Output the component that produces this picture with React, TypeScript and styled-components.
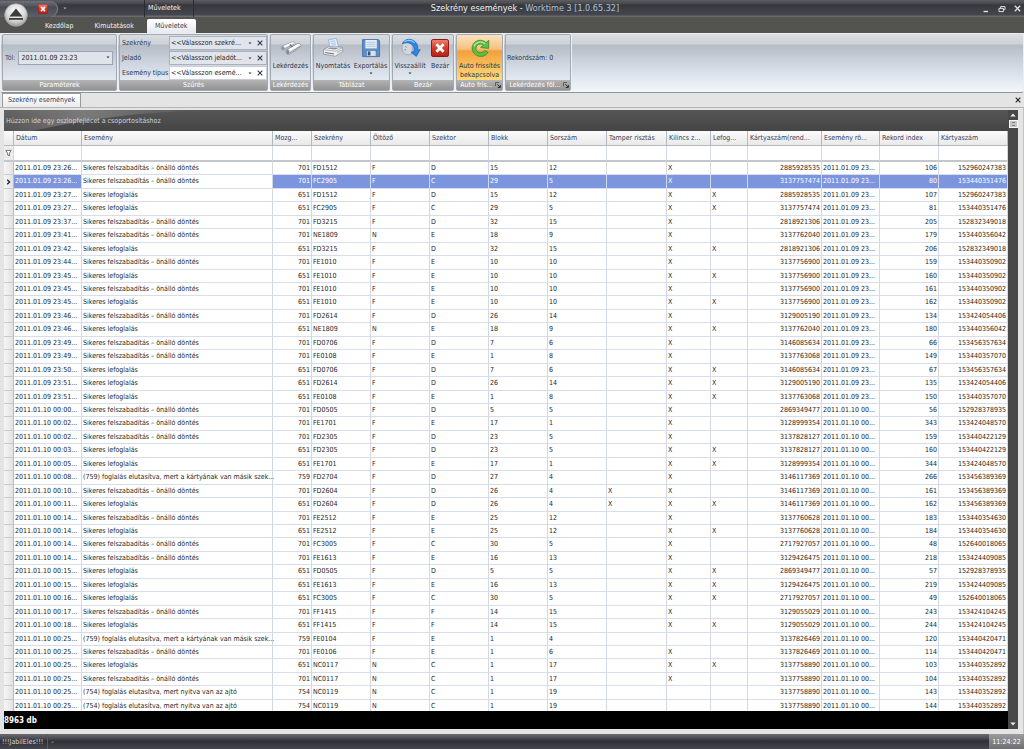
import React, { useState } from 'react';
import styled, { createGlobalStyle, css } from 'styled-components';

const GlobalStyle = createGlobalStyle`
  *, *::before, *::after { box-sizing: border-box; }
  html, body { margin: 0; padding: 0; }
  body, button, input, select, table {
    font-family: 'DejaVu Sans Condensed', 'DejaVu Sans', sans-serif;
    font-size: 7px;
    color: #1c1f26;
  }
  button, input, select { margin: 0; padding: 0; border: 0; background: none; outline: none; }
  button { cursor: pointer; }
`;

const Window = styled.div`
  display: flex;
  flex-direction: column;
  height: 100vh;
  overflow: hidden;
  background: #e4e4e4;
  line-height: 10px;
`;

/* ---------- title bar ---------- */

const TitleBar = styled.header`
  position: relative;
  flex: none;
  display: grid;
  grid-template-columns: 144px 50px 1fr auto;
  height: 17px;
  background: linear-gradient(#5c5d60 0, #4c4d52 3px, #36383e 5px, #45474e 15px, #6a6a72 16px);
`;

const QuickAccess = styled.div`
  display: flex;
  align-items: center;
  justify-content: flex-end;
  width: 58px;
  height: 16px;
  padding-right: 9px;
  border-right: 1px solid #80838b;
  border-radius: 0 8px 8px 0;
  background: linear-gradient(#6d7078, #4a4c53 40%, #5d6068);
`;

const QuickRow = styled.div`
  display: flex;
  align-items: center;
  gap: 5px;
  color: #b9bcc4;
`;

const IconButton = styled.button`
  display: flex;
  align-items: center;
  justify-content: center;
  flex: none;
  color: inherit;
`;

const ContextTitle = styled.div`
  border-left: 1px solid #2c2d31;
  border-right: 1px solid #2c2d31;
  padding-left: 3px;
  line-height: 17px;
  color: #f4f4f4;
`;

const Title = styled.h1`
  margin: 0;
  padding-right: 126px;
  text-align: center;
  font-size: 9px;
  font-weight: normal;
  line-height: 17px;
  color: #f0f0f0;
  span { color: #a9c0de; }
`;

const WindowButtons = styled.div`
  display: flex;
  align-items: center;
  gap: 8px;
  padding-right: 3px;
  color: #dfe0e4;
`;

const AppButton = styled.button`
  position: absolute;
  left: 4px;
  top: 3px;
  z-index: 2;
  display: block;
  width: 24px;
  height: 24px;
`;

/* ---------- ribbon ---------- */

const TabRow = styled.nav`
  flex: none;
  display: flex;
  align-items: flex-end;
  gap: 5px;
  height: 16px;
  padding-left: 37px;
  background: #535350;
`;

const Tab = styled.button<{ $active?: boolean }>`
  height: 14px;
  padding: 0 8px;
  border-radius: 2px 2px 0 0;
  line-height: 14px;
  color: ${(p) => (p.$active ? '#3a3f4a' : '#f2f2f2')};
  background: ${(p) => (p.$active ? 'linear-gradient(#ffffff, #e6e9ee)' : 'transparent')};
`;

const Ribbon = styled.div`
  flex: none;
  height: 60px;
  background: #e4e4e4;
`;

const RibbonBody = styled.div`
  display: flex;
  gap: 2px;
  height: 60px;
  padding: 0 1px 1px;
  border: 1px solid #eceef1;
  border-bottom-color: #8f949b;
  border-radius: 3px;
  background: linear-gradient(#dbdee3 0, #cdd2d8 10px, #b6bcc6 11px, #d5dbe4 34px, #f2f7fb 58px);
`;

const Group = styled.section<{ $w: number }>`
  flex: none;
  display: flex;
  flex-direction: column;
  width: ${(p) => p.$w}px;
  border: 1px solid #a3a9b2;
  border-radius: 2px;
  box-shadow: 1px 0 0 #eef1f4;
`;

const GroupContent = styled.div`
  flex: 1;
  display: flex;
  justify-content: center;
  min-height: 0;
`;

const GroupCaption = styled.div`
  flex: none;
  display: flex;
  align-items: center;
  height: 10px;
  padding: 0 1px;
  color: #ffffff;
  background: linear-gradient(#b4b4b4, #929292);
  white-space: nowrap;
  overflow: hidden;
  span { flex: 1; text-align: center; }
`;

const DateField = styled.label`
  align-self: center;
  display: flex;
  align-items: center;
  width: 100%;
  padding: 0 3px 0 2px;
  gap: 3px;
  color: #3b4a66;
`;

const FieldBox = styled.span`
  flex: 1;
  display: flex;
  height: 14px;
  padding: 0 2px;
  border: 1px solid #9aa4b2;
  background: #dfe4ea;
  color: #2b2f38;
`;

const TextInput = styled.input`
  flex: 1;
  min-width: 0;
  line-height: 10px;
`;

const FilterGrid = styled.div`
  display: grid;
  grid-template-columns: 47px 1fr;
  grid-auto-rows: 14px;
  row-gap: 1px;
  align-content: start;
  align-items: center;
  width: 100%;
  padding: 1px 3px 0 2px;
  color: #2b3850;
`;

const Combo = styled.div<{ $hot?: boolean }>`
  display: flex;
  align-items: center;
  height: 14px;
  padding: 0 3px 0 1px;
  gap: 5px;
  border: 1px solid ${(p) => (p.$hot ? '#c9ced6' : '#a9b1bd')};
  background: ${(p) => (p.$hot ? '#ffffff' : '#e1e5eb')};
`;

const Select = styled.select`
  appearance: none;
  flex: 1;
  min-width: 0;
  height: 12px;
  line-height: 12px;
`;

const Tool = styled.button<{ $on?: boolean; $w: number }>`
  display: flex;
  flex-direction: column;
  align-items: center;
  flex: none;
  width: ${(p) => p.$w}px;
  padding-top: 2px;
  line-height: 9px;
  white-space: nowrap;
  color: #28344a;
  ${(p) =>
    p.$on &&
    css`
      background: linear-gradient(#fbe3c0 0, #f6c080 14px, #f2a03c 16px, #ffdc7c 100%);
    `}
  svg { flex: none; }
`;

const ToolLabel = styled.span`
  margin: 3px 0 1px;
  text-align: center;
  white-space: pre-line;
`;

const Status = styled.p`
  align-self: center;
  flex: 1;
  margin: 0;
  padding: 0 1px;
  color: #2b3850;
`;

/* ---------- document area ---------- */

const DocTabs = styled.div`
  flex: none;
  display: flex;
  align-items: center;
  justify-content: space-between;
  height: 15px;
  padding: 0 3px 0 2px;
  border-bottom: 1px solid #b4b4b4;
  color: #222222;
`;

const DocTab = styled.button`
  height: 14px;
  padding: 0 5px;
  border: 1px solid #9a9a9a;
  border-bottom: 0;
  background: linear-gradient(#ffffff, #ebebeb);
  line-height: 13px;
  color: #33415c;
`;

const Frame = styled.main`
  flex: 1;
  display: flex;
  min-height: 0;
  padding: 2px 5px 5px 4px;
  border-right: 1px solid #c4c4c4;
`;

const GridPane = styled.div`
  flex: 1;
  display: flex;
  flex-direction: column;
  min-width: 0;
`;

const GroupPanel = styled.div`
  position: relative;
  flex: none;
  height: 21px;
  padding: 0 2px;
  line-height: 22px;
  color: #d2d2d2;
  background: linear-gradient(#565656, #444444);
  svg { position: absolute; left: 0; top: 0; }
  span { position: relative; }
`;

const GridScroll = styled.div`
  flex: 1;
  min-height: 0;
  overflow: hidden;
  background: #ffffff;
`;

const Grid = styled.table`
  width: 100%;
  table-layout: fixed;
  border-collapse: separate;
  border-spacing: 0;
`;

const HeadCell = styled.th`
  height: 15px;
  padding: 0 3px 0 2px;
  border-right: 1px solid #b4b8c0;
  border-bottom: 1px solid #b4b8c0;
  background: linear-gradient(#fbfbfb, #e9e9e9);
  font-weight: normal;
  text-align: left;
  line-height: 12px;
  white-space: nowrap;
  overflow: hidden;
  color: #35425a;
`;

const FilterCell = styled.td<{ $gutter?: boolean }>`
  height: 16px;
  padding: 0 1px 1px;
  border-right: 1px solid #d3d7e8;
  border-bottom: 2px solid #c3c6ca;
  background: ${(p) => (p.$gutter ? '#ededed' : '#ffffff')};
  line-height: 0;
  input { width: 100%; height: 11px; }
`;

const Row = styled.tr<{ $selected?: boolean }>`
  height: 13px;
  /* the row pitch alternates 13/14, restarting every nine rows */
  &:nth-child(9n + 2),
  &:nth-child(9n + 4),
  &:nth-child(9n + 6),
  &:nth-child(9n + 8) { height: 14px; }
  ${(p) =>
    p.$selected &&
    css`
      td { background: #7b95de; color: #ffffff; }
      td:nth-of-type(2) { background: #ffffff; color: #1c1f26; }
    `}
`;

const Cell = styled.td<{ $right?: boolean }>`
  padding: 0 1px;
  border-right: 1px solid #d3d7e8;
  border-bottom: 1px solid #d9dcea;
  text-align: ${(p) => (p.$right ? 'right' : 'left')};
  line-height: 11px;
  white-space: nowrap;
`;

const RowHead = styled.th`
  padding: 0 2px;
  border-right: 1px solid #b9bcc4;
  border-bottom: 1px solid #c9c9c9;
  background: linear-gradient(90deg, #f6f6f6, #e2e2e2);
  line-height: 0;
`;

const Footer = styled.footer`
  flex: none;
  height: 18px;
  background: #000000;
  color: #ffffff;
  font-size: 8px;
  font-weight: bold;
  line-height: 19px;
`;

const ScrollBar = styled.div`
  flex: none;
  display: flex;
  flex-direction: column;
  align-items: center;
  width: 10px;
  background: #484848;
  color: #f0f0f0;
  button { width: 10px; height: 10px; }
`;

const Thumb = styled.div`
  width: 9px;
  height: 8px;
  padding: 1px 2px;
  background: #c4c4c4;
  border: 1px solid #f6f6f6;
  div { height: 4px; border-top: 1px solid #808080; border-bottom: 1px solid #808080; }
`;

const Spacer = styled.div`
  flex: 1;
`;

const StatusBar = styled.div`
  flex: none;
  display: flex;
  justify-content: space-between;
  height: 15px;
  line-height: 16px;
  color: #d9dbe0;
  background: linear-gradient(#6a6c72 0, #4c4e55 4px, #2f3136 7px, #45474e 15px);
`;

const StatusText = styled.div`
  display: flex;
  gap: 4px;
  padding-left: 2px;
  span + span { border-left: 1px solid #5a5c62; padding-left: 3px; }
`;

const Clock = styled.time`
  width: 35px;
  text-align: center;
  background: linear-gradient(#9a9b9d, #6e6f72);
  color: #ffffff;
`;

/* ---------- icons ---------- */

const CrossIcon = ({ size = 6, weight = 1.1 }: { size?: number; weight?: number }) => (
  <svg width={size} height={size} viewBox="0 0 6 6" aria-hidden="true">
    <path d="M0.7 0.7 5.3 5.3M5.3 0.7 0.7 5.3" stroke="currentColor" strokeWidth={weight} />
  </svg>
);

const DownIcon = ({ up = false }: { up?: boolean }) => (
  <svg width="6" height="4" viewBox="0 0 6 4" aria-hidden="true">
    <path d={up ? 'M0.4 3.5 3 0.6 5.6 3.5z' : 'M0.4 0.5 3 3.4 5.6 0.5z'} fill="currentColor" />
  </svg>
);

const CaretIcon = () => (
  <svg width="4" height="3" viewBox="0 0 4 3" aria-hidden="true">
    <path d="M0.5 0.6H3.5L2 2.3z" fill="currentColor" />
  </svg>
);

const RedCloseIcon = ({ size }: { size: number }) => (
  <svg width={size} height={size} viewBox="0 0 18 18" aria-hidden="true">
    <defs>
      <linearGradient id="redFill" x1="0" y1="0" x2="0" y2="1">
        <stop offset="0" stopColor="#ee8272" />
        <stop offset="0.5" stopColor="#d63a2b" />
        <stop offset="1" stopColor="#b51f16" />
      </linearGradient>
    </defs>
    <rect x="0.5" y="0.5" width="17" height="17" rx="1.6" fill="url(#redFill)" stroke="#8f1a14" />
    <path d="M5.4 5.2 12.6 12.8M12.6 5.2 5.4 12.8" stroke="#ffffff" strokeWidth="2.8" />
  </svg>
);

const AppIcon = () => (
  <svg width="24" height="24" viewBox="0 0 24 24" aria-hidden="true">
    <defs>
      <radialGradient id="orb" cx="0.5" cy="0.35" r="0.7">
        <stop offset="0" stopColor="#ffffff" />
        <stop offset="0.6" stopColor="#d5d5d5" />
        <stop offset="1" stopColor="#8d8d8d" />
      </radialGradient>
    </defs>
    <circle cx="12" cy="12" r="11.3" fill="url(#orb)" stroke="#a6a6a6" strokeWidth="0.8" />
    <path d="M12 5.4 18.6 13.4H5.4z" fill="#3c3c3c" />
    <rect x="5" y="15" width="14" height="1.8" fill="#3c3c3c" />
  </svg>
);

const ScopeIcon = () => (
  <svg width="22" height="22" viewBox="0 0 22 22" aria-hidden="true">
    <path d="M2 9.2 12.6 4.8C14.6 4.4 16 6.6 14.6 8L4.6 13.2C2 13.8 0.6 10.8 2 9.2z" fill="#eceef0" stroke="#8b9097" strokeWidth="0.7" />
    <path d="M6.8 12.8 18 6.4C20.2 5.8 21.8 8.4 20.2 10L9.6 17.2C6.8 18 5 14.8 6.8 12.8z" fill="#f4f5f6" stroke="#7b8087" strokeWidth="0.7" />
    <path d="M4.2 12 14 7.2M9.2 16 20 9.2" stroke="#9ba0a7" strokeWidth="1.1" />
    <path d="M4 9.6 12.6 5.9M9 13 18 7.6" stroke="#ffffff" strokeWidth="1.3" />
    <ellipse cx="3" cy="11.3" rx="1.5" ry="2" fill="#8d939a" />
    <ellipse cx="7.8" cy="15" rx="1.7" ry="2.2" fill="#868c93" />
    <path d="M9.8 7.4 12.2 9.8" stroke="#6c7178" strokeWidth="1.4" />
  </svg>
);

const PrinterIcon = () => (
  <svg width="22" height="22" viewBox="0 0 22 22" aria-hidden="true">
    <path d="M6.4 2.8 14.4 1.4 16.6 9.8 8 11.4z" fill="#e4f1fc" stroke="#8aa5bf" strokeWidth="0.7" />
    <path d="M8.2 4.6 13.2 3.8M8.8 6.6 13.8 5.8M9.4 8.4 14.2 7.6" stroke="#8fbbe4" strokeWidth="0.8" />
    <path d="M1.4 12.4 7 9.6 20.4 10.2 21 14.4 13.6 19.2 1.6 17.2z" fill="#eceef0" stroke="#84898f" strokeWidth="0.7" />
    <path d="M1.4 12.6 13.6 14.2 20.6 10.4" stroke="#9aa0a6" strokeWidth="0.7" fill="none" />
    <path d="M5.2 11.6 8.4 10.4 16.6 10.9 13.2 12.4z" fill="#8a9097" />
    <path d="M3.2 15.6 12 16.9" stroke="#6a6f75" strokeWidth="1" />
    <path d="M15 15.6 19.8 12.8" stroke="#b9bdc2" strokeWidth="1.4" />
  </svg>
);

const FloppyIcon = () => (
  <svg width="22" height="22" viewBox="0 0 22 22" aria-hidden="true">
    <path d="M2.6 2.6H18.4L19.6 4V19.6H2.6z" fill="#5b8fc9" stroke="#3a689f" strokeWidth="0.8" />
    <rect x="5.4" y="3" width="11.4" height="8.4" fill="#e6eef6" />
    <path d="M6.6 5.4H15.6M6.6 7.4H15.6M6.6 9.4H15.6" stroke="#a6c2df" strokeWidth="0.8" />
    <rect x="6.4" y="13.4" width="9.6" height="5.8" fill="#dce1e7" stroke="#3a689f" strokeWidth="0.5" />
    <rect x="7.8" y="14.4" width="2.6" height="4" fill="#35577f" />
  </svg>
);

const RestoreIcon = () => (
  <svg width="22" height="22" viewBox="0 0 22 22" aria-hidden="true">
    <path d="M4 6.6C7 4 12 5 13.4 9.4L13 16.8C9.6 18.8 5 17.6 3.6 14 2.8 11.4 2.8 8.6 4 6.6z" fill="#d3d7dc" stroke="#989ea6" strokeWidth="0.7" />
    <path d="M6.4 9.4 7.8 10.4M5.4 13 7 12.6" stroke="#7d848c" strokeWidth="0.9" />
    <path d="M3.2 6.8C5 2.6 10.2 1 14.4 3.4 18 5.4 19.4 9 18.8 13L21.2 12.6 17.4 19.4 12 15.4 15 14.4C15.6 11 14.6 8 11.8 6.8 9 5.4 6 5.6 3.2 6.8z" fill="#2b86e4" stroke="#1a5aa8" strokeWidth="0.6" />
    <path d="M5.4 4.8C8.4 2.6 13 2.8 15.6 6" stroke="#8fd0ff" strokeWidth="1.1" fill="none" />
  </svg>
);

const RefreshIcon = () => (
  <svg width="22" height="22" viewBox="0 0 22 22" aria-hidden="true">
    <path d="M19.8 3.4 19.6 11.4 11.6 10.6 14.4 8.2C12 6.2 8.2 7 7.2 10 6.2 13.4 9 16.4 12.4 15.6 14 15.2 15 14.4 15.8 13.4L19 15.4C17.2 18.4 13.6 20 10 19.2 5 18 2 13.2 3.6 8.6 5.4 3.2 12.4 1.4 17 5.6z" fill="#5fbf42" stroke="#338a22" strokeWidth="0.8" />
    <path d="M5 9.4C6.4 4.8 12.2 3.4 16.2 6.8" stroke="#b6ec9a" strokeWidth="1.2" fill="none" />
  </svg>
);

const LauncherIcon = () => (
  <svg width="6" height="6" viewBox="0 0 6 6" aria-hidden="true">
    <path d="M0.5 4V0.5H4" stroke="#5c5c5c" fill="none" />
    <path d="M2.4 2.4 5 5M5.4 3V5.5H2.8" stroke="#303030" fill="none" />
  </svg>
);

const FunnelIcon = () => (
  <svg width="7" height="8" viewBox="0 0 7 8" aria-hidden="true">
    <path d="M0.8 1.4H6.2L4.4 4.2V6.8L2.6 6V4.2z" fill="#ffffff" stroke="#555555" strokeWidth="0.8" />
  </svg>
);

const PointerIcon = () => (
  <svg width="5" height="6" viewBox="0 0 5 6" aria-hidden="true">
    <path d="M1.2 0.8 3.6 3 1.2 5.2" stroke="#222222" strokeWidth="1.3" fill="none" />
  </svg>
);

/* ---------- data ---------- */

const EVENTS: Record<number, string> = {
  701: 'Sikeres felszabadítás – önálló döntés',
  651: 'Sikeres lefoglalás',
  759: '(759) foglalás elutasítva, mert a kártyának van másik szek...',
  754: '(754) foglalás elutasítva, mert nyitva van az ajtó',
};

// time, movement code, locker, flags (T tamper, K handle, L reserved), sorted card no., record index, card no.
type Entry = [string, number, string, string, string, number, string];

const ENTRIES: Entry[] = [
  ['09 23:26', 701, 'FD1512', 'K', '2885928535', 106, '152960247383'],
  ['09 23:26', 701, 'FC2905', 'K', '3137757474', 80, '153440351476'],
  ['09 23:27', 651, 'FD1512', 'KL', '2885928535', 107, '152960247383'],
  ['09 23:27', 651, 'FC2905', 'KL', '3137757474', 81, '153440351476'],
  ['09 23:37', 701, 'FD3215', 'K', '2818921306', 205, '152832349018'],
  ['09 23:41', 701, 'NE1809', 'K', '3137762040', 179, '153440356042'],
  ['09 23:42', 651, 'FD3215', 'KL', '2818921306', 206, '152832349018'],
  ['09 23:44', 701, 'FE1010', 'K', '3137756900', 159, '153440350902'],
  ['09 23:45', 651, 'FE1010', 'KL', '3137756900', 160, '153440350902'],
  ['09 23:45', 701, 'FE1010', 'K', '3137756900', 161, '153440350902'],
  ['09 23:45', 651, 'FE1010', 'KL', '3137756900', 162, '153440350902'],
  ['09 23:46', 701, 'FD2614', 'K', '3129005190', 134, '153424054406'],
  ['09 23:46', 651, 'NE1809', 'KL', '3137762040', 180, '153440356042'],
  ['09 23:49', 701, 'FD0706', 'K', '3146085634', 66, '153456357634'],
  ['09 23:49', 701, 'FE0108', 'K', '3137763068', 149, '153440357070'],
  ['09 23:50', 651, 'FD0706', 'KL', '3146085634', 67, '153456357634'],
  ['09 23:51', 651, 'FD2614', 'KL', '3129005190', 135, '153424054406'],
  ['09 23:51', 651, 'FE0108', 'KL', '3137763068', 150, '153440357070'],
  ['10 00:00', 701, 'FD0505', 'K', '2869349477', 56, '152928378935'],
  ['10 00:02', 701, 'FE1701', 'K', '3128999354', 343, '153424048570'],
  ['10 00:02', 701, 'FD2305', 'K', '3137828127', 159, '153440422129'],
  ['10 00:03', 651, 'FD2305', 'KL', '3137828127', 160, '153440422129'],
  ['10 00:05', 651, 'FE1701', 'KL', '3128999354', 344, '153424048570'],
  ['10 00:08', 759, 'FD2704', 'K', '3146117369', 266, '153456389369'],
  ['10 00:10', 701, 'FD2604', 'TK', '3146117369', 161, '153456389369'],
  ['10 00:11', 651, 'FD2604', 'TKL', '3146117369', 162, '153456389369'],
  ['10 00:14', 701, 'FE2512', 'K', '3137760628', 183, '153440354630'],
  ['10 00:14', 651, 'FE2512', 'KL', '3137760628', 184, '153440354630'],
  ['10 00:14', 701, 'FC3005', 'K', '2717927057', 48, '152640018065'],
  ['10 00:14', 701, 'FE1613', 'K', '3129426475', 218, '153424409085'],
  ['10 00:15', 651, 'FD0505', 'KL', '2869349477', 57, '152928378935'],
  ['10 00:15', 651, 'FE1613', 'KL', '3129426475', 219, '153424409085'],
  ['10 00:16', 651, 'FC3005', 'KL', '2717927057', 49, '152640018065'],
  ['10 00:17', 701, 'FF1415', 'K', '3129055029', 243, '153424104245'],
  ['10 00:18', 651, 'FF1415', 'KL', '3129055029', 244, '153424104245'],
  ['10 00:25', 759, 'FE0104', '', '3137826469', 120, '153440420471'],
  ['10 00:25', 701, 'FE0106', 'K', '3137826469', 114, '153440420471'],
  ['10 00:25', 651, 'NC0117', 'KL', '3137758890', 103, '153440352892'],
  ['10 00:25', 701, 'NC0117', 'K', '3137758890', 104, '153440352892'],
  ['10 00:25', 754, 'NC0119', '', '3137758890', 143, '153440352892'],
  ['10 00:25', 754, 'NC0119', '', '3137758890', 144, '153440352892'],
];

const COLUMNS: { label: string; width: number; right?: boolean }[] = [
  { label: 'Dátum', width: 68 },
  { label: 'Esemény', width: 191 },
  { label: 'Mozg...', width: 39, right: true },
  { label: 'Szekrény', width: 59 },
  { label: 'Öltöző', width: 59 },
  { label: 'Szektor', width: 59 },
  { label: 'Blokk', width: 59 },
  { label: 'Sorszám', width: 59 },
  { label: 'Tamper risztás', width: 60 },
  { label: 'Kilincs z...', width: 44 },
  { label: 'Lefog...', width: 37 },
  { label: 'Kártyaszám(rend...', width: 74, right: true },
  { label: 'Esemény rö...', width: 58 },
  { label: 'Rekord index', width: 59, right: true },
  { label: 'Kártyaszám', width: 69, right: true },
];

const toCells = ([time, code, locker, flags, sorted, index, card]: Entry) => [
  `2011.01.${time}...`,
  EVENTS[code],
  code,
  locker,
  locker[0],
  locker[1],
  Number(locker.slice(2, 4)),
  Number(locker.slice(4)),
  flags.includes('T') ? 'X' : '',
  flags.includes('K') ? 'X' : '',
  flags.includes('L') ? 'X' : '',
  sorted,
  `2011.01.${time.slice(0, 5)}...`,
  index,
  card,
];

const FILTERS = [
  { id: 'locker', label: 'Szekrény', value: '<<Válasszon szekré...' },
  { id: 'tag', label: 'Jeladó', value: '<<Válasszon jeladót...' },
  { id: 'type', label: 'Esemény típus', value: '<<Válasszon esemé...', hot: true },
];

/* ---------- parts ---------- */

const RibbonGroup = ({
  title,
  width,
  launcher,
  children,
}: {
  title: string;
  width: number;
  launcher?: boolean;
  children: React.ReactNode;
}) => (
  <Group $w={width}>
    <GroupContent>{children}</GroupContent>
    <GroupCaption>
      <span>{title}</span>
      {launcher && (
        <IconButton aria-label={`${title} beállításai`}>
          <LauncherIcon />
        </IconButton>
      )}
    </GroupCaption>
  </Group>
);

export default function App() {
  const [selected, setSelected] = useState(1);
  const [from, setFrom] = useState('2011.01.09 23:23');

  return (
    <Window>
      <GlobalStyle />
      <TitleBar>
        <AppButton aria-label="Alkalmazás menü">
          <AppIcon />
        </AppButton>
        <QuickRow>
          <QuickAccess>
            <IconButton aria-label="Bezár">
              <RedCloseIcon size={10} />
            </IconButton>
          </QuickAccess>
          <IconButton aria-label="Gyorselérés testreszabása">
            <CaretIcon />
          </IconButton>
        </QuickRow>
        <ContextTitle>Műveletek</ContextTitle>
        <Title>
          Szekrény események - <span>Worktime 3 [1.0.65.32]</span>
        </Title>
        <WindowButtons>
          <IconButton aria-label="Kis méret">
            <svg width="8" height="8" viewBox="0 0 8 8" aria-hidden="true">
              <path d="M1.5 6.5H6" stroke="currentColor" strokeWidth="1.4" />
            </svg>
          </IconButton>
          <IconButton aria-label="Előző méret">
            <svg width="8" height="8" viewBox="0 0 8 8" aria-hidden="true">
              <path d="M2.6 3V1.6H7V4.6H5.6M1 3.4H5.4V6.6H1z" stroke="currentColor" fill="none" />
            </svg>
          </IconButton>
          <IconButton aria-label="Ablak bezárása">
            <CrossIcon size={7} />
          </IconButton>
        </WindowButtons>
      </TitleBar>

      <TabRow>
        <Tab>Kezdőlap</Tab>
        <Tab>Kimutatások</Tab>
        <Tab $active>Műveletek</Tab>
      </TabRow>

      <Ribbon>
        <RibbonBody>
          <RibbonGroup title="Paraméterek" width={115}>
            <DateField>
              Tól:
              <FieldBox>
                <TextInput type="text" value={from} onChange={(e) => setFrom(e.target.value)} />
                <IconButton aria-label="Naptár">
                  <CaretIcon />
                </IconButton>
              </FieldBox>
            </DateField>
          </RibbonGroup>
          <RibbonGroup title="Szűrés" width={149}>
            <FilterGrid>
              {FILTERS.map((f) => (
                <React.Fragment key={f.id}>
                  <label htmlFor={f.id}>{f.label}</label>
                  <Combo $hot={f.hot}>
                    <Select id={f.id}>
                      <option>{f.value}</option>
                    </Select>
                    <CaretIcon />
                    <IconButton aria-label={`${f.label} törlése`}>
                      <CrossIcon />
                    </IconButton>
                  </Combo>
                </React.Fragment>
              ))}
            </FilterGrid>
          </RibbonGroup>
          <RibbonGroup title="Lekérdezés" width={41}>
            <Tool $w={39}>
              <ScopeIcon />
              <ToolLabel>Lekérdezés</ToolLabel>
            </Tool>
          </RibbonGroup>
          <RibbonGroup title="Táblázat" width={77}>
            <Tool $w={38}>
              <PrinterIcon />
              <ToolLabel>Nyomtatás</ToolLabel>
            </Tool>
            <Tool $w={37}>
              <FloppyIcon />
              <ToolLabel>Exportálás</ToolLabel>
              <CaretIcon />
            </Tool>
          </RibbonGroup>
          <RibbonGroup title="Bezár" width={62}>
            <Tool $w={34}>
              <RestoreIcon />
              <ToolLabel>Visszaállít</ToolLabel>
              <CaretIcon />
            </Tool>
            <Tool $w={26}>
              <svg width="22" height="22" viewBox="0 0 22 22" aria-hidden="true">
                <g transform="translate(2 2)">
                  <RedCloseIcon size={18} />
                </g>
              </svg>
              <ToolLabel>Bezár</ToolLabel>
            </Tool>
          </RibbonGroup>
          <RibbonGroup title="Auto fris..." width={47} launcher>
            <Tool $w={45} $on>
              <RefreshIcon />
              <ToolLabel>{'Auto frissítés\nbekapcsolva'}</ToolLabel>
            </Tool>
          </RibbonGroup>
          <RibbonGroup title="Lekérdezés föl..." width={66} launcher>
            <Status>Rekordszám: 0</Status>
          </RibbonGroup>
        </RibbonBody>
      </Ribbon>

      <DocTabs>
        <DocTab>Szekrény események</DocTab>
        <IconButton aria-label="Lap bezárása">
          <CrossIcon />
        </IconButton>
      </DocTabs>

      <Frame>
        <GridPane>
          <GroupPanel>
            <svg width="200" height="21" viewBox="0 0 200 21" aria-hidden="true">
              <defs>
                <linearGradient id="sweep" x1="0" y1="0" x2="1" y2="0">
                  <stop offset="0" stopColor="#909090" stopOpacity="0.2" />
                  <stop offset="0.4" stopColor="#909090" stopOpacity="0.65" />
                  <stop offset="1" stopColor="#909090" stopOpacity="0" />
                </linearGradient>
              </defs>
              <path d="M0 0H200C140 2 80 9 28 21H0z" fill="url(#sweep)" />
            </svg>
            <span>Húzzon ide egy oszlopfejlécet a csoportosításhoz</span>
          </GroupPanel>
          <GridScroll>
            <Grid>
              <colgroup>
                <col width={10} />
                {COLUMNS.map((c) => (
                  <col key={c.label} width={c.width} />
                ))}
              </colgroup>
              <thead>
                <tr>
                  <HeadCell />
                  {COLUMNS.map((c) => (
                    <HeadCell key={c.label} scope="col">
                      {c.label}
                    </HeadCell>
                  ))}
                </tr>
                <tr>
                  <FilterCell $gutter>
                    <FunnelIcon />
                  </FilterCell>
                  {COLUMNS.map((c) => (
                    <FilterCell key={c.label}>
                      <input type="text" aria-label={`${c.label} szűrő`} />
                    </FilterCell>
                  ))}
                </tr>
              </thead>
              <tbody>
                {ENTRIES.map((entry, i) => (
                  <Row key={i} $selected={i === selected} onClick={() => setSelected(i)}>
                    <RowHead scope="row">{i === selected && <PointerIcon />}</RowHead>
                    {toCells(entry).map((value, c) => (
                      <Cell key={c} $right={COLUMNS[c].right}>
                        {value}
                      </Cell>
                    ))}
                  </Row>
                ))}
              </tbody>
            </Grid>
          </GridScroll>
          <Footer>8963 db</Footer>
        </GridPane>
        <ScrollBar>
          <IconButton aria-label="Görgetés fel">
            <DownIcon up />
          </IconButton>
          <Thumb>
            <div />
          </Thumb>
          <Spacer />
          <IconButton aria-label="Görgetés le">
            <DownIcon />
          </IconButton>
        </ScrollBar>
      </Frame>

      <StatusBar>
        <StatusText>
          <span>!!!JabilEles!!!</span>
          <span>-</span>
        </StatusText>
        <Clock>11:24:22</Clock>
      </StatusBar>
    </Window>
  );
}
